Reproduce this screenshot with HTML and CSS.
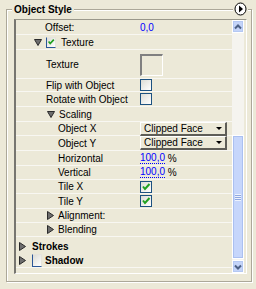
FILE: index.html
```html
<!DOCTYPE html>
<html>
<head>
<meta charset="utf-8">
<link rel="stylesheet" href="styles.css">
</head>
<body>
<div class="group">
  <div class="title">Object Style</div>
  <div class="menu-btn">
    <svg width="13" height="14" viewBox="0 0 13 14"><ellipse cx="6.5" cy="7" rx="5.5" ry="6" fill="#fff" stroke="#000" stroke-width="1"/><polygon points="5,3.5 9,7 5,10.5" fill="#000"/></svg>
  </div>
  <div class="panel">
    <div class="list">
      <div class="row h15"><span class="label ind-a">Offset:</span><span class="val blue">0,0</span></div>
      <div class="row h15"><span class="label ind-h">
        <svg class="tri" width="8" height="7" viewBox="0 0 8 7"><polygon points="0.5,0.5 7.5,0.5 4,6.5" fill="#6d6d6d" stroke="#2a2a2a"/></svg>
        <span class="cb-open"><svg width="10" height="10" viewBox="0 0 10 10"><path d="M2 4.5 L4 7 L8.5 2" fill="none" stroke="#21a121" stroke-width="2"/></svg></span>
        <span>Texture</span></span></div>
      <div class="row h29"><span class="label ind-b">Texture</span><span class="val"><span class="swatch"></span></span></div>
      <div class="row h13"><span class="label ind-b">Flip with Object</span><span class="val"><span class="cb"></span></span></div>
      <div class="row h15"><span class="label ind-b">Rotate with Object</span><span class="val"><span class="cb"></span></span></div>
      <div class="row h15"><span class="label ind-c">
        <svg class="tri" width="8" height="7" viewBox="0 0 8 7"><polygon points="0.5,0.5 7.5,0.5 4,6.5" fill="#6d6d6d" stroke="#2a2a2a"/></svg>
        <span>Scaling</span></span></div>
      <div class="row h14"><span class="label ind-d">Object X</span><span class="val"><span class="select">Clipped Face<i class="arrow"></i></span></span></div>
      <div class="row h15"><span class="label ind-d">Object Y</span><span class="val"><span class="select">Clipped Face<i class="arrow"></i></span></span></div>
      <div class="row h15"><span class="label ind-d">Horizontal</span><span class="val"><span class="blue num">100,0</span>&nbsp;%</span></div>
      <div class="row h14"><span class="label ind-d">Vertical</span><span class="val"><span class="blue num">100,0</span>&nbsp;%</span></div>
      <div class="row h14"><span class="label ind-d">Tile X</span><span class="val"><span class="cb checked"><svg width="10" height="10" viewBox="0 0 10 10"><path d="M2 4.5 L4 7 L8.5 2" fill="none" stroke="#21a121" stroke-width="2"/></svg></span></span></div>
      <div class="row h15"><span class="label ind-d">Tile Y</span><span class="val"><span class="cb checked"><svg width="10" height="10" viewBox="0 0 10 10"><path d="M2 4.5 L4 7 L8.5 2" fill="none" stroke="#21a121" stroke-width="2"/></svg></span></span></div>
      <div class="row h14"><span class="label ind-c">
        <svg class="tri" width="7" height="9" viewBox="0 0 7 9"><polygon points="0.5,0.5 6.5,4.5 0.5,8.5" fill="#6d6d6d" stroke="#2a2a2a"/></svg>
        <span>Alignment:</span></span></div>
      <div class="row h14"><span class="label ind-c">
        <svg class="tri" width="7" height="9" viewBox="0 0 7 9"><polygon points="0.5,0.5 6.5,4.5 0.5,8.5" fill="#6d6d6d" stroke="#2a2a2a"/></svg>
        <span>Blending</span></span></div>
      <div class="row h16 plain top"><span class="label ind-s bold">
        <svg class="tri" width="7" height="9" viewBox="0 0 7 9"><polygon points="0.5,0.5 6.5,4.5 0.5,8.5" fill="#6d6d6d" stroke="#2a2a2a"/></svg>
        <span class="gap-s">Strokes</span></span></div>
      <div class="row h15"><span class="label ind-s bold">
        <svg class="tri" width="7" height="9" viewBox="0 0 7 9"><polygon points="0.5,0.5 6.5,4.5 0.5,8.5" fill="#6d6d6d" stroke="#2a2a2a"/></svg>
        <span class="cb-open big"></span>
        <span>Shadow</span></span></div>
    </div>
    <div class="scroll">
      <div class="sbtn"><svg width="8" height="6" viewBox="0 0 8 6"><path d="M1 4.5 L4 1.5 L7 4.5" fill="none" stroke="#4d6185" stroke-width="2"/></svg></div>
      <div class="track">
        <div class="thumb"><span class="grip"></span></div>
      </div>
      <div class="sbtn"><svg width="8" height="6" viewBox="0 0 8 6"><path d="M1 1.5 L4 4.5 L7 1.5" fill="none" stroke="#4d6185" stroke-width="2"/></svg></div>
    </div>
  </div>
</div>
</body>
</html>
```
FILE: styles.css
```css
html, body {
  margin: 0;
  padding: 0;
  background: #ece9d8;
}
body {
  width: 256px;
  height: 289px;
  overflow: hidden;
  font-family: "Liberation Sans", Arial, sans-serif;
  font-size: 10px;
  color: #000;
}
.group {
  position: relative;
  margin: 9px 4px 0 6px;
  height: 273px;
  box-sizing: border-box;
  border: 1px solid #aca899;
  box-shadow: inset 1px 1px 0 #fff, 1px 1px 0 #fff;
  padding: 9px 4px 0 7px;
}
.title {
  position: absolute;
  top: -7px;
  left: 5px;
  padding: 0 2px;
  line-height: 13px;
  font-weight: bold;
  background: #ece9d8;
}
.menu-btn {
  position: absolute;
  top: -8px;
  right: 3px;
  padding: 0 1px;
  background: #ece9d8;
  display: flex;
}
.panel {
  display: flex;
  height: 255px;
  box-sizing: border-box;
  border-top: 1px solid #9a988b;
  border-left: 2px solid #777670;
  border-right: 1px solid #fff;
  border-bottom: 1px solid #fff;
}
.list {
  width: 216px;
  display: flex;
  flex-direction: column;
}
.row {
  display: flex;
  align-items: center;
  box-sizing: border-box;
  border-bottom: 1px solid #f8f7f2;
  white-space: nowrap;
}
.row.plain { border-bottom: 0; }
.row.top { align-items: flex-end; padding-bottom: 1px; }
.h13 { height: 13px; }
.h14 { height: 14px; }
.h15 { height: 15px; }
.h16 { height: 16px; }
.h29 { height: 29px; }
.label {
  width: 124px;
  box-sizing: border-box;
  display: flex;
  align-items: center;
}
.ind-a { padding-left: 29px; }
.ind-b { padding-left: 30px; }
.ind-c { padding-left: 31px; }
.ind-d { padding-left: 42px; }
.ind-h { padding-left: 18px; }
.ind-s { padding-left: 3px; }
.tri { display: block; margin-right: 4px; flex: none; }
.ind-c .tri { margin-right: 4px; }
.ind-s .tri { margin-right: 6px; }
.bold { font-weight: bold; }
.val {
  display: flex;
  align-items: center;
}
.blue { color: #0000ff; }
.num {
  border-bottom: 1px dotted #0000ff;
  line-height: 10px;
}
.cb-open {
  width: 10px;
  height: 11px;
  box-sizing: border-box;
  border-left: 1px solid #2b5797;
  border-bottom: 1px solid #2b5797;
  border-top: 1px solid #e6e4dc;
  border-right: 1px solid #e6e4dc;
  background: linear-gradient(135deg, #dcdcd5, #fff);
  margin-right: 5px;
  display: flex;
  align-items: center;
  justify-content: center;
  flex: none;
}
.cb-open.big { width: 10px; height: 13px; margin-right: 3px; }
.cb {
  width: 12px;
  height: 12px;
  box-sizing: border-box;
  border: 1px solid #1c5180;
  background: linear-gradient(135deg, #dcdcd5, #fff);
  display: flex;
  align-items: center;
  justify-content: center;
}
.swatch {
  display: block;
  width: 23px;
  height: 22px;
  box-sizing: border-box;
  border-top: 2px solid #808080;
  border-left: 2px solid #808080;
  border-right: 1px solid #fff;
  border-bottom: 1px solid #fff;
  margin-top: 1px;
}
.select {
  position: relative;
  width: 87px;
  height: 14px;
  box-sizing: border-box;
  border-top: 1px solid #fff;
  border-left: 1px solid #fff;
  border-right: 2px solid #5e5d57;
  border-bottom: 2px solid #5e5d57;
  padding-left: 3px;
  display: flex;
  align-items: center;
  line-height: 11px;
}
.arrow {
  margin-left: auto;
  margin-right: 3px;
  width: 0;
  height: 0;
  border-left: 3px solid transparent;
  border-right: 3px solid transparent;
  border-top: 3px solid #000;
}
.scroll {
  width: 12px;
  margin-right: 1px;
  display: flex;
  flex-direction: column;
  background: #f5f4ef;
}
.sbtn {
  height: 13px;
  box-sizing: border-box;
  border: 1px solid #fff;
  background: #c4d4f8;
  box-shadow: inset 0 0 0 1px #b4c8f3;
  display: flex;
  align-items: center;
  justify-content: center;
  flex: none;
}
.track {
  flex: 1;
  display: flex;
  flex-direction: column;
  justify-content: flex-end;
  padding-bottom: 1px;
}
.thumb {
  height: 124px;
  box-sizing: border-box;
  border: 1px solid #fff;
  background: #c6d6fb;
  box-shadow: inset 0 0 0 1px #aac0f1;
  display: flex;
  align-items: center;
  justify-content: center;
}
.grip {
  width: 6px;
  height: 7px;
  background: repeating-linear-gradient(#eef3fe 0 1px, #8fa8e0 1px 2px);
}
```
